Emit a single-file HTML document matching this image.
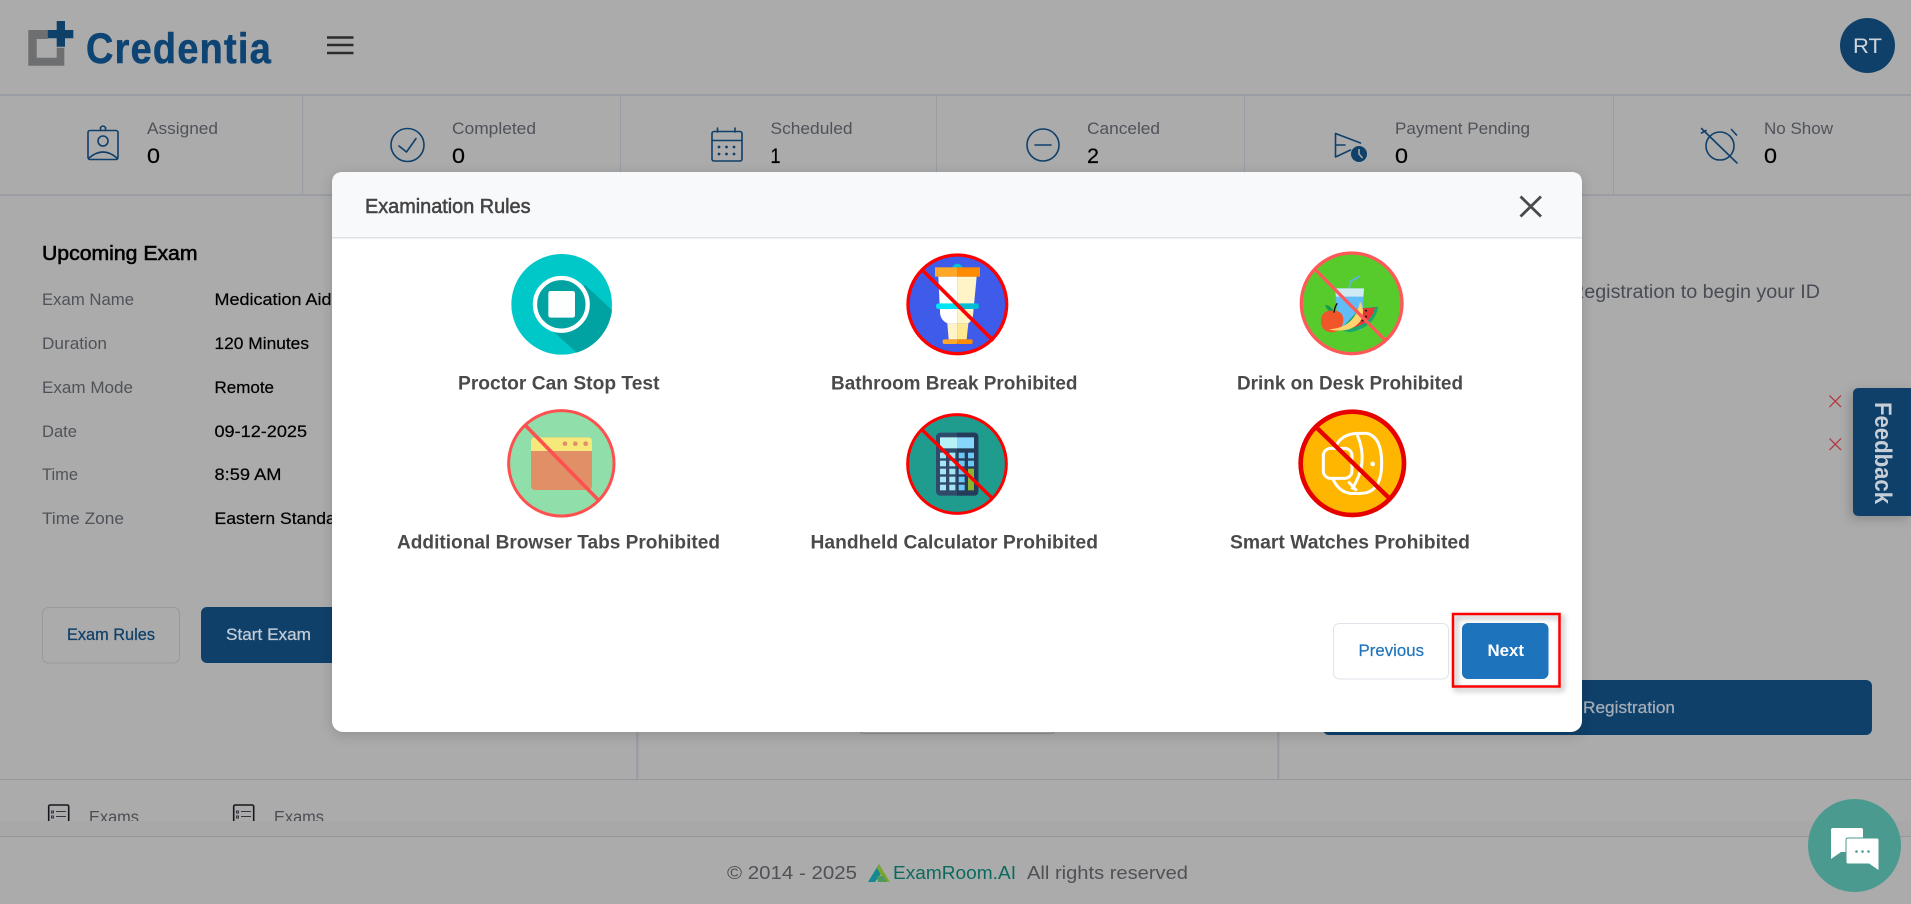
<!DOCTYPE html>
<html lang="en">
<head>
<meta charset="utf-8">
<title>Credentia - Examination Rules</title>
<style>
html,body{margin:0;padding:0;width:1911px;height:904px;overflow:hidden;background:#ababab}
svg{display:block;position:absolute;left:0;top:0}
text{font-family:"Liberation Sans",Arial,sans-serif}
.lab{font-size:17px;fill:#4f5359}
.num{font-size:21px;fill:#000;stroke:#000;stroke-width:.2px}
.rowl{font-size:16.5px;fill:#4f5359}
.rowv{font-size:16.5px;fill:#000;stroke:#000;stroke-width:.2px}
.rule{font-size:19px;font-weight:700;fill:#4a4a4a}
.ic{fill:none;stroke:#0f406a;stroke-width:1.600;stroke-linecap:round;stroke-linejoin:round}
</style>
</head>
<body>
<svg width="1911" height="904" viewBox="0 0 1911 904" xmlns="http://www.w3.org/2000/svg">
<rect width="1911" height="904" fill="#ababab"/>

<!-- header -->
<path d="M28.300 30H47.700V39H36.700V57.700H56.700V47.700H64.300V65.700H28.300Z" fill="#6e6f71"/>
<path d="M56.700 21H65V30H73.300V38.300H65V46.700H56.700V38.300H47.700V30H56.700Z" fill="#0f406a"/>
<text transform="translate(86 63) scale(.88 1)" x="0" y="0" font-size="43" font-weight="700" fill="#0e4473" stroke="#0e4473" stroke-width=".6" textLength="210" lengthAdjust="spacing">Credentia</text>
<path d="M327 37.500H353.500M327 45H353.500M327 53H353.500" stroke="#2c2c2c" stroke-width="2.400" fill="none"/>
<circle cx="1867.500" cy="45.500" r="27.500" fill="#0f406a"/>
<text x="1853" y="53" font-size="21" fill="#cfd4da" textLength="29" lengthAdjust="spacingAndGlyphs">RT</text>

<!-- stat row -->
<rect x="0" y="94" width="1911" height="2" fill="#9a9da3"/>
<rect x="0" y="194" width="1911" height="2" fill="#9a9da3"/>
<g fill="#9a9da3">
<rect x="302" y="96" width="1" height="98"/><rect x="620" y="96" width="1" height="98"/>
<rect x="936" y="96" width="1" height="98"/><rect x="1244" y="96" width="1" height="98"/>
<rect x="1613" y="96" width="1" height="98"/>
</g>

<g class="ic">
<rect x="88" y="130.500" width="30" height="29" rx="2"/>
<path d="M100.500 130.500V127.500Q103 124.500 105.500 127.500V130.500"/>
<circle cx="103" cy="141" r="5"/>
<path d="M89 158Q103 146 117 158"/>
<circle cx="407.500" cy="145" r="16.500"/>
<path d="M399 146L406.500 152L416 138.500"/>
<rect x="712" y="131.500" width="30" height="29.500" rx="2"/>
<path d="M712 140.500H742M717.500 128V132M735 128V132"/>
<circle cx="1043" cy="145" r="16"/>
<path d="M1035 145H1051"/>
<path d="M1335.500 133.500L1360.500 143M1335.500 133.500V157L1350.500 150M1335.500 145H1345"/>
<circle cx="1720" cy="146" r="14"/>
<path d="M1701.500 128.500L1737 163M1731.500 129.500L1736.500 135M1701.500 133L1706 130.500"/>
</g>
<g fill="#0f406a">
<circle cx="719" cy="147" r="1.400"/><circle cx="726.500" cy="147" r="1.400"/><circle cx="734" cy="147" r="1.400"/>
<circle cx="719" cy="154" r="1.400"/><circle cx="726.500" cy="154" r="1.400"/><circle cx="734" cy="154" r="1.400"/>
<circle cx="1359" cy="154" r="8"/>
</g>
<path d="M1359 149V154L1362.500 158" stroke="#ababab" stroke-width="1.500" fill="none"/>

<text class="lab" x="147" y="134" textLength="71" lengthAdjust="spacingAndGlyphs">Assigned</text>
<text class="num" x="147" y="163" textLength="13" lengthAdjust="spacingAndGlyphs">0</text>
<text class="lab" x="452" y="134" textLength="84" lengthAdjust="spacingAndGlyphs">Completed</text>
<text class="num" x="452" y="163" textLength="13" lengthAdjust="spacingAndGlyphs">0</text>
<text class="lab" x="770.500" y="134" textLength="82" lengthAdjust="spacingAndGlyphs">Scheduled</text>
<text class="num" x="770.500" y="163" textLength="10" lengthAdjust="spacingAndGlyphs">1</text>
<text class="lab" x="1087" y="134" textLength="73" lengthAdjust="spacingAndGlyphs">Canceled</text>
<text class="num" x="1087" y="163" textLength="12" lengthAdjust="spacingAndGlyphs">2</text>
<text class="lab" x="1395" y="134" textLength="135" lengthAdjust="spacingAndGlyphs">Payment Pending</text>
<text class="num" x="1395" y="163" textLength="13" lengthAdjust="spacingAndGlyphs">0</text>
<text class="lab" x="1764" y="134" textLength="69" lengthAdjust="spacingAndGlyphs">No Show</text>
<text class="num" x="1764" y="163" textLength="13" lengthAdjust="spacingAndGlyphs">0</text>

<!-- upcoming exam -->
<text x="42" y="260" font-size="20" fill="#000" stroke="#000" stroke-width=".55" textLength="155.500" lengthAdjust="spacingAndGlyphs">Upcoming Exam</text>
<text class="rowl" x="42" y="305" textLength="92" lengthAdjust="spacingAndGlyphs">Exam Name</text>
<text class="rowv" x="214.500" y="305" textLength="117" lengthAdjust="spacingAndGlyphs">Medication Aid</text>
<text class="rowl" x="42" y="349" textLength="65" lengthAdjust="spacingAndGlyphs">Duration</text>
<text class="rowv" x="214.500" y="349" textLength="94.500" lengthAdjust="spacingAndGlyphs">120 Minutes</text>
<text class="rowl" x="42" y="393" textLength="91" lengthAdjust="spacingAndGlyphs">Exam Mode</text>
<text class="rowv" x="214.500" y="393" textLength="59.500" lengthAdjust="spacingAndGlyphs">Remote</text>
<text class="rowl" x="42" y="437" textLength="35" lengthAdjust="spacingAndGlyphs">Date</text>
<text class="rowv" x="214.500" y="437" textLength="92.500" lengthAdjust="spacingAndGlyphs">09-12-2025</text>
<text class="rowl" x="42" y="480" textLength="36" lengthAdjust="spacingAndGlyphs">Time</text>
<text class="rowv" x="214.500" y="480" textLength="67" lengthAdjust="spacingAndGlyphs">8:59 AM</text>
<text class="rowl" x="42" y="524" textLength="82" lengthAdjust="spacingAndGlyphs">Time Zone</text>
<text class="rowv" x="214.500" y="524" textLength="180" lengthAdjust="spacingAndGlyphs">Eastern Standard Time</text>

<rect x="42.500" y="607.500" width="137" height="55.500" rx="6" fill="none" stroke="#97999e"/>
<text x="67" y="640" font-size="16.500" fill="#0f406a" stroke="#0f406a" stroke-width=".25" textLength="88" lengthAdjust="spacingAndGlyphs">Exam Rules</text>
<rect x="201" y="607" width="160" height="56" rx="6" fill="#0f406a"/>
<text x="226" y="640" font-size="16.500" fill="#c4ccd6" stroke="#c4ccd6" stroke-width=".25" textLength="85" lengthAdjust="spacingAndGlyphs">Start Exam</text>

<!-- right column bits -->
<text x="1570" y="298" font-size="19" fill="#484c54" textLength="250" lengthAdjust="spacingAndGlyphs">Registration to begin your ID</text>
<path d="M1829.500 395.500L1841 407M1841 395.500L1829.500 407M1829.500 438.500L1841 450M1841 438.500L1829.500 450" stroke="#b03e44" stroke-width="1.300" fill="none"/>
<rect x="1323" y="680" width="549" height="55" rx="6" fill="#0f406a"/>
<text x="1583" y="713" font-size="17" fill="#a5aeb9" stroke="#a5aeb9" stroke-width=".25" textLength="92" lengthAdjust="spacingAndGlyphs">Registration</text>
<rect x="859" y="700" width="197" height="33.500" rx="5" fill="none" stroke="#8f9096"/>

<!-- column lines -->
<rect x="636" y="196" width="2.500" height="583" fill="#9a9da3"/>
<rect x="1277" y="196" width="2.500" height="583" fill="#9a9da3"/>
<rect x="0" y="779" width="1911" height="1" fill="#9698a0"/>

<!-- exam tabs -->
<g fill="none" stroke="#14171d" stroke-width="1.600">
<rect x="48.700" y="805" width="20" height="24" rx="1.500"/>
<rect x="233.700" y="805" width="20" height="24" rx="1.500"/>
</g>
<path d="M51.500 811H53.500V813H51.500ZM56 811.500H66M51.500 816H53.500V818H51.500ZM56 816.500H66M236.500 811H238.500V813H236.500ZM241 811.500H251M236.500 816H238.500V818H236.500ZM241 816.500H251" stroke="#33363c" fill="none"/>
<text x="89" y="822.500" font-size="17" fill="#4a4d53" textLength="50" lengthAdjust="spacingAndGlyphs">Exams</text>
<text x="274" y="822.500" font-size="17" fill="#4a4d53" textLength="50" lengthAdjust="spacingAndGlyphs">Exams</text>

<!-- footer -->
<rect x="0" y="821" width="1911" height="15" fill="#a9a8a9"/>
<rect x="0" y="836" width="1911" height="1" fill="#9698a0"/>
<rect x="0" y="837" width="1911" height="67" fill="#ababab"/>
<text x="727" y="879" font-size="18.500" fill="#505156" textLength="130" lengthAdjust="spacingAndGlyphs">© 2014 - 2025</text>
<path d="M868 882L879 864L883 871L875 882Z" fill="#14898f"/>
<path d="M879 864L890 882H885L877 868Z" fill="#7ea62e"/>
<path d="M877 876H884L887 882H878Z" fill="#4d9a5a"/>
<text x="893" y="879" font-size="18.500" fill="#0b6a5e" textLength="123" lengthAdjust="spacingAndGlyphs">ExamRoom.AI</text>
<text x="1027" y="879" font-size="18.500" fill="#505156" textLength="161" lengthAdjust="spacingAndGlyphs">All rights reserved</text>

<!-- feedback -->
<path d="M1911 388H1859Q1853 388 1853 394V510Q1853 516 1859 516H1911Z" fill="#0f406a" style="filter:drop-shadow(-3px 3px 5px rgba(0,0,0,.18))"/>
<text transform="translate(1875 402) rotate(90)" font-size="24" font-weight="700" fill="#c6ced8" textLength="102" lengthAdjust="spacingAndGlyphs">Feedback</text>

<!-- chat -->
<circle cx="1854.500" cy="845.500" r="46.500" fill="#4b9a8f"/>
<path d="M1833 828H1861Q1863 828 1863 830V850Q1863 852 1861 852H1841L1831 859V830Q1831 828 1833 828Z" fill="#fff"/>
<path d="M1848 838H1877Q1879 838 1879 840V871L1869 864H1848Q1846 864 1846 862V840Q1846 838 1848 838Z" fill="#fff" stroke="#4b9a8f" stroke-width="1"/>
<g fill="#4b9a8f"><circle cx="1856.500" cy="851.500" r="1.300"/><circle cx="1862.500" cy="851.500" r="1.300"/><circle cx="1868.500" cy="851.500" r="1.300"/></g>

<!-- modal -->
<rect x="332" y="172" width="1250" height="560" rx="11" fill="#fff" style="filter:drop-shadow(0 3px 6px rgba(0,0,0,.15))"/>
<path d="M332 237V183Q332 172 343 172H1571Q1582 172 1582 183V237Z" fill="#f8f9fb"/>
<rect x="332" y="237" width="1250" height="1.500" fill="#dfe1e7"/>
<text x="365" y="213" font-size="20" fill="#444" stroke="#444" stroke-width=".55" textLength="165.500" lengthAdjust="spacingAndGlyphs">Examination Rules</text>
<path d="M1520.500 196.500L1541 216.500M1541 196.500L1520.500 216.500" stroke="#4a4a4a" stroke-width="2.800" fill="none"/>

<!-- proctor icon -->
<g transform="translate(460 240) scale(.33333)">
<circle cx="305" cy="193" r="151" fill="#00c8c8"/>
<path d="M280 275L350 338A151 151 0 0 0 456 210L375 135Z" fill="#00a2a2"/>
<circle cx="304" cy="193" r="79" fill="#00a2a2" stroke="#fff" stroke-width="13"/>
<rect x="265" y="153" width="80" height="80" rx="7" fill="#fdfefe"/>
</g>

<!-- tabs icon -->
<g transform="translate(460 240) scale(.33333)">
<circle cx="304" cy="670" r="158" fill="#90dfaa" stroke="#ff5050" stroke-width="9"/>
<rect x="213" y="592" width="183" height="158" rx="12" fill="#e18f66"/>
<path d="M213 633V604Q213 592 225 592H384Q396 592 396 604V633Z" fill="#f7e87c"/>
<g fill="#e18f66"><circle cx="315" cy="611" r="7"/><circle cx="346" cy="611" r="7"/><circle cx="377" cy="611" r="7"/></g>
<path d="M195 555L415 780" stroke="#ff5050" stroke-width="11" fill="none"/>
</g>

<!-- toilet icon -->
<g transform="translate(860 240) scale(.33333)">
<circle cx="292" cy="193" r="148" fill="#3f5bea" stroke="#f00" stroke-width="10"/>
<path d="M276 82Q292 60 308 82Z" fill="#00c4d4"/>
<path d="M235 110H292V250H262Q240 240 240 215Z" fill="#fff"/>
<path d="M292 110H350L340 215Q340 240 325 250H292Z" fill="#fff3c8"/>
<rect x="225" y="82" width="67" height="28" fill="#ffa726"/>
<rect x="292" y="82" width="68" height="28" fill="#ff8c00"/>
<path d="M236 190H292V207H236Q228 207 228 198Q228 190 236 190Z" fill="#00e5f5"/>
<path d="M292 190H349Q357 190 357 198Q357 207 349 207H292Z" fill="#00bcd4"/>
<path d="M262 250H292V298H266Z" fill="#fff3c8"/>
<path d="M292 250H325L320 298H292Z" fill="#ffe88f"/>
<rect x="248" y="298" width="45" height="14" rx="5" fill="#ffa726"/>
<rect x="292" y="298" width="46" height="14" rx="5" fill="#ff8c00"/>
<path d="M187 90L400 302" stroke="#f00" stroke-width="11" fill="none"/>
</g>

<!-- calculator icon -->
<g transform="translate(860 240) scale(.33333)">
<circle cx="291" cy="672" r="148" fill="#209c8f" stroke="#f00" stroke-width="9"/>
<rect x="228" y="578" width="127" height="189" rx="13" fill="#2f4a6b"/>
<path d="M291 578H342Q355 578 355 591V754Q355 767 342 767H291Z" fill="#243c5a"/>
<rect x="240" y="592" width="51" height="33" fill="#b6f1f5"/>
<rect x="291" y="592" width="51" height="33" fill="#86d5fb"/>
<g fill="#a5e6f2">
<rect x="240" y="638" width="18" height="17"/><rect x="268" y="638" width="18" height="17"/>
<rect x="240" y="662" width="18" height="17"/><rect x="268" y="662" width="18" height="17"/>
<rect x="240" y="686" width="18" height="17"/><rect x="268" y="686" width="18" height="17"/>
<rect x="240" y="710" width="18" height="17"/><rect x="268" y="710" width="18" height="17"/>
<rect x="240" y="734" width="18" height="17"/><rect x="268" y="734" width="18" height="17"/>
</g>
<g fill="#6cc7f5">
<rect x="296" y="638" width="18" height="17"/><rect x="324" y="638" width="18" height="17"/>
<rect x="296" y="662" width="18" height="17"/><rect x="324" y="662" width="18" height="17"/>
<rect x="296" y="686" width="18" height="17"/>
<rect x="296" y="710" width="18" height="17"/>
<rect x="296" y="734" width="18" height="17"/>
</g>
<rect x="324" y="686" width="18" height="65" fill="#8cb52e"/>
<path d="M187 570L398 776" stroke="#f00" stroke-width="10" fill="none"/>
</g>

<!-- drink icon -->
<g transform="translate(1260 240) scale(.33333)">
<circle cx="275" cy="190" r="151" fill="#57cb2c" stroke="#ff5858" stroke-width="10"/>
<path d="M268 150L270 125L300 108" stroke="#5ab4f0" stroke-width="5" fill="none"/>
<path d="M225 145H312L305 270H235Z" fill="#62bcf8"/>
<path d="M225 145H312L310 170H228Z" fill="#cfeaf5"/>
<path d="M300 205L355 200Q345 262 270 277L240 270Z" fill="#1aa86a"/>
<path d="M305 205L345 203Q335 250 280 262Z" fill="#e53935"/>
<path d="M195 195Q212 195 222 215Q205 220 195 195Z" fill="#1a9850"/>
<path d="M183 243Q183 212 215 212Q250 210 250 240Q248 275 215 277Q183 275 183 243Z" fill="#f1552a"/>
<path d="M232 190Q224 200 222 218" stroke="#111" stroke-width="4" fill="none"/>
<path d="M205 268Q285 265 300 185Q318 215 300 245Q270 282 205 268Z" fill="#ffd36e"/>
<g fill="#111"><circle cx="318" cy="212" r="3"/><circle cx="318" cy="230" r="3"/><circle cx="308" cy="242" r="3"/></g>
<path d="M167 90L375 300" stroke="#ff5858" stroke-width="10" fill="none"/>
</g>

<!-- watch icon -->
<g transform="translate(1260 240) scale(.33333)">
<circle cx="277" cy="670" r="155" fill="#ffb600" stroke="#e60000" stroke-width="14"/>
<path d="M225 625Q240 582 292 580H320Q365 590 365 670Q365 745 320 758Q300 762 270 760Q235 755 218 715" fill="none" stroke="#fff" stroke-width="9"/>
<path d="M292 585Q328 670 275 748" fill="none" stroke="#fff" stroke-width="9"/>
<path d="M265 725L290 752" fill="none" stroke="#fff" stroke-width="9"/>
<rect x="190" y="625" width="86" height="90" rx="22" fill="#ffb600" stroke="#fff" stroke-width="9"/>
<circle cx="338" cy="672" r="7" fill="#fff"/>
<path d="M172 565L388 775" stroke="#e60000" stroke-width="13" fill="none"/>
</g>

<text class="rule" x="458" y="389.500" textLength="201.500" lengthAdjust="spacingAndGlyphs">Proctor Can Stop Test</text>
<text class="rule" x="831" y="389.500" textLength="246.500" lengthAdjust="spacingAndGlyphs">Bathroom Break Prohibited</text>
<text class="rule" x="1237" y="389.500" textLength="226" lengthAdjust="spacingAndGlyphs">Drink on Desk Prohibited</text>
<text class="rule" x="397" y="548.500" textLength="323" lengthAdjust="spacingAndGlyphs">Additional Browser Tabs Prohibited</text>
<text class="rule" x="810.500" y="548.500" textLength="287.500" lengthAdjust="spacingAndGlyphs">Handheld Calculator Prohibited</text>
<text class="rule" x="1230" y="548.500" textLength="240" lengthAdjust="spacingAndGlyphs">Smart Watches Prohibited</text>

<!-- modal buttons -->
<rect x="1333.500" y="623.500" width="115" height="55.500" rx="6" fill="#fff" stroke="#e0e3ea"/>
<text x="1358.500" y="656" font-size="17" fill="#1f74bd" stroke="#1f74bd" stroke-width=".2" textLength="65.500" lengthAdjust="spacingAndGlyphs">Previous</text>
<rect x="1462" y="623" width="86.500" height="56" rx="6" fill="#1d74bd"/>
<text x="1487.500" y="656" font-size="17" font-weight="700" fill="#fff" textLength="36.500" lengthAdjust="spacingAndGlyphs">Next</text>
<rect x="1453" y="614" width="106.500" height="72.500" fill="none" stroke="#f00" stroke-width="2.500" style="filter:drop-shadow(3px 3px 3px rgba(0,0,0,.35))"/>
</svg>
</body>
</html>
